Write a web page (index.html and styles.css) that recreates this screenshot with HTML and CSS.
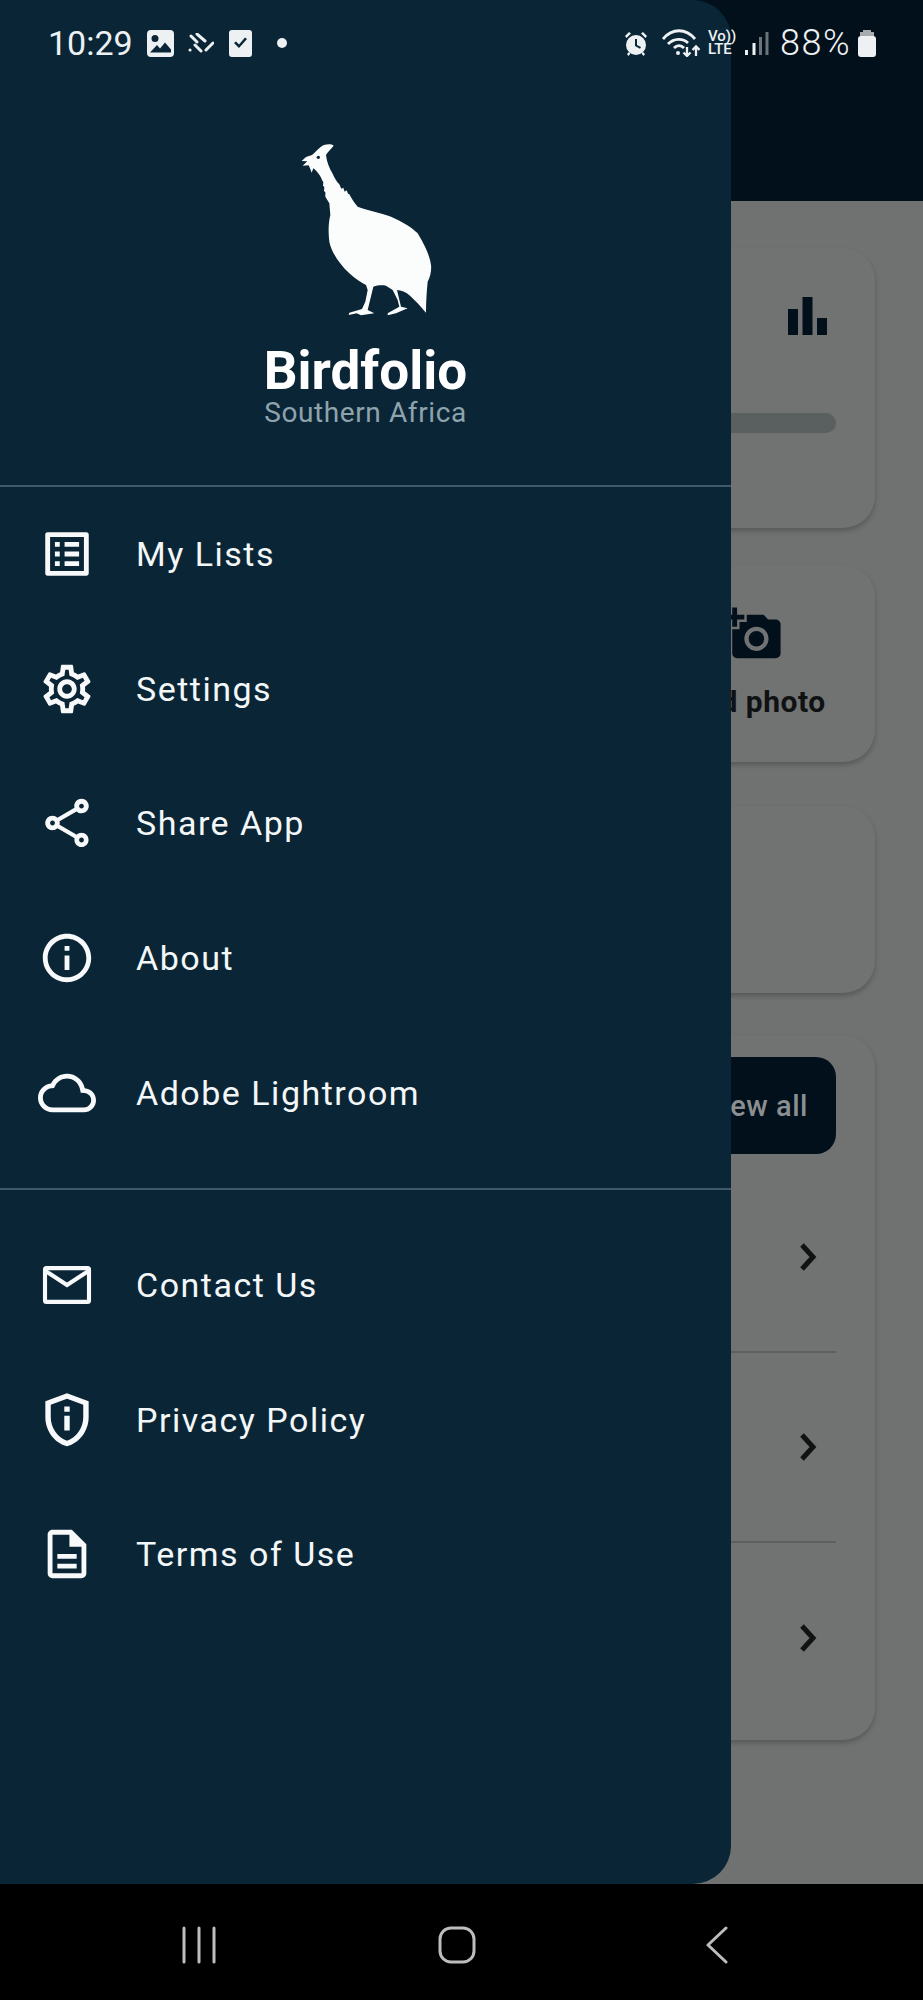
FILE: index.html
```html
<!DOCTYPE html>
<html lang="en">
<head>
<meta charset="utf-8">
<title>Birdfolio</title>
<link rel="stylesheet" href="styles.css">
</head>
<body>
<div class="phone">
  <main class="screen">
    <div class="appbar"></div>
    <div class="content">
      <section class="card card-stats">
        <svg class="bars" viewBox="0 0 39 38"><rect x="0" y="12" width="10" height="26"/><rect x="14.500" y="0" width="10" height="38"/><rect x="29" y="21" width="10" height="17"/></svg>
        <div class="progress"></div>
      </section>
      <section class="card card-photo">
        <div class="photo-tile">
          <svg class="camera" viewBox="0 0 24 24"><path fill-rule="evenodd" d="M3 4V1h2v3h3v2H5v3H3V6H0V4h3zm3 6V7h3V4h7l1.830 2H21c1.100 0 2 .9 2 2v12c0 1.100-.9 2-2 2H5c-1.100 0-2-.9-2-2V10h3zm7 9c2.760 0 5-2.240 5-5s-2.240-5-5-5-5 2.240-5 5 2.240 5 5 5z"/><circle class="lens-dark" cx="13" cy="14" r="3.200"/></svg>
          <span class="photo-label">Add photo</span>
        </div>
      </section>
      <section class="card card-blank"></section>
      <section class="card card-list">
        <div class="view-all"><span>View all</span></div>
        <div class="list-row"><svg class="chev" viewBox="0 0 18 28"><path d="M3 2l11 12L3 26"/></svg></div>
        <div class="list-row"><svg class="chev" viewBox="0 0 18 28"><path d="M3 2l11 12L3 26"/></svg></div>
        <div class="list-row"><svg class="chev" viewBox="0 0 18 28"><path d="M3 2l11 12L3 26"/></svg></div>
      </section>
    </div>
  </main>

  <nav class="navbar">
    <svg class="nav-recent" viewBox="0 0 34 38"><path d="M2 2v34M17 2v34M32 2v34"/></svg>
    <svg class="nav-home" viewBox="0 0 38 38"><rect x="2" y="2" width="34" height="34" rx="11"/></svg>
    <svg class="nav-back" viewBox="0 0 22 38"><path d="M20 2L2 19l18 17"/></svg>
  </nav>

  <aside class="drawer">
    <header class="drawer-head">
      <svg class="bird" viewBox="0 0 450 570">
        <path d="M143 32C135 26 118 26 105 35C95 42 88 52 78 60L60 66L47 78L64 79L50 92L68 91L72 100L77 113L82 100C92 108 104 122 108 135L112 142L111 152L115 156L114 168L118 172L118 185L130 205L133 240C128 260 126 285 130 320C136 350 158 385 190 415C205 430 225 443 240 450L245 465L238 500L228 522L190 533L188 540L212 535L225 541L265 535L245 525L262 455C275 450 290 450 300 452L320 465L335 495L340 515L305 535L305 541L330 535L365 520L345 515L333 465C345 465 360 472 372 482L395 505L420 533C420 500 422 470 425 440C433 425 437 405 435 390C432 370 425 345 395 295C375 275 345 258 315 245C290 235 240 225 215 215C205 205 197 190 190 178L186 176L182 166L176 170L172 158L166 161L160 148C152 140 145 128 140 116C130 100 122 80 120 60C125 50 135 42 143 32Z"/>
        <circle class="bird-eye" cx="97" cy="67" r="5"/>
      </svg>
      <h1 class="brand">Birdfolio</h1>
      <p class="region">Southern Africa</p>
    </header>
    <ul class="menu menu-main">
      <li class="menu-item"><svg class="ico" viewBox="0 0 24 24"><path d="M19 5v14H5V5h14m1.100-2H3.900c-.5 0-.9.4-.9.9v16.200c0 .4.4.9.9.9h16.200c.4 0 .9-.5.9-.9V3.900c0-.5-.5-.9-.9-.9zM11 7h6v2h-6V7zm0 4h6v2h-6v-2zm0 4h6v2h-6zM7 7h2v2H7zm0 4h2v2H7zm0 4h2v2H7z"/></svg><span>My Lists</span></li>
      <li class="menu-item"><svg class="ico" viewBox="0 0 24 24"><path d="M19.430 12.980c.04-.32.07-.64.07-.98 0-.34-.03-.66-.07-.98l2.110-1.650c.19-.15.24-.42.12-.64l-2-3.460c-.09-.16-.26-.25-.44-.25-.06 0-.12.01-.17.03l-2.490 1c-.52-.4-1.080-.73-1.690-.98l-.38-2.650C14.460 2.180 14.250 2 14 2h-4c-.25 0-.46.18-.49.42l-.38 2.650c-.61.25-1.170.59-1.690.98l-2.490-1c-.06-.02-.12-.03-.18-.03-.17 0-.34.09-.43.25l-2 3.460c-.13.22-.07.49.12.64l2.110 1.650c-.04.32-.07.65-.07.98 0 .33.03.66.07.98l-2.110 1.650c-.19.15-.24.42-.12.64l2 3.460c.09.16.26.25.44.25.06 0 .12-.01.17-.03l2.490-1c.52.4 1.080.73 1.690.98l.38 2.650c.03.24.24.42.49.42h4c.25 0 .46-.18.49-.42l.38-2.650c.61-.25 1.170-.59 1.690-.98l2.490 1c.06.02.12.03.18.03.17 0 .34-.09.43-.25l2-3.460c.12-.22.07-.49-.12-.64l-2.110-1.650zm-1.980-1.710c.04.31.05.52.05.73 0 .21-.02.43-.05.73l-.14 1.130.89.7 1.080.84-.7 1.210-1.270-.51-1.040-.42-.9.68c-.43.32-.84.56-1.250.73l-1.060.43-.16 1.130-.2 1.350h-1.400l-.19-1.350-.16-1.130-1.060-.43c-.43-.18-.83-.41-1.230-.71l-.91-.7-1.060.43-1.270.51-.7-1.210 1.080-.84.89-.7-.14-1.130c-.03-.31-.05-.54-.05-.74s.02-.43.05-.73l.14-1.130-.89-.7-1.080-.84.7-1.210 1.270.51 1.040.42.9-.68c.43-.32.84-.56 1.250-.73l1.060-.43.16-1.130.2-1.350h1.390l.19 1.350.16 1.130 1.060.43c.43.18.83.41 1.230.71l.91.7 1.060-.43 1.270-.51.7 1.210-1.070.85-.89.7.14 1.130zM12 8c-2.210 0-4 1.790-4 4s1.790 4 4 4 4-1.790 4-4-1.790-4-4-4zm0 6c-1.100 0-2-.9-2-2s.9-2 2-2 2 .9 2 2-.9 2-2 2z"/></svg><span>Settings</span></li>
      <li class="menu-item"><svg class="ico" viewBox="0 0 24 24"><path d="M18 16.080c-.76 0-1.440.3-1.960.77L8.910 12.700c.05-.23.09-.46.09-.7s-.04-.47-.09-.7l7.050-4.110c.54.5 1.250.81 2.040.81 1.660 0 3-1.340 3-3s-1.340-3-3-3-3 1.340-3 3c0 .24.04.47.09.7L8.040 9.810C7.500 9.310 6.790 9 6 9c-1.660 0-3 1.340-3 3s1.340 3 3 3c.79 0 1.500-.31 2.040-.81l7.120 4.160c-.05.21-.08.43-.08.65 0 1.610 1.310 2.920 2.920 2.920s2.920-1.310 2.920-2.920c0-1.610-1.310-2.920-2.920-2.920zM18 4c.55 0 1 .45 1 1s-.45 1-1 1-1-.45-1-1 .45-1 1-1zM6 13c-.55 0-1-.45-1-1s.45-1 1-1 1 .45 1 1-.45 1-1 1zm12 7.020c-.55 0-1-.45-1-1s.45-1 1-1 1 .45 1 1-.45 1-1 1z"/></svg><span>Share App</span></li>
      <li class="menu-item"><svg class="ico" viewBox="0 0 24 24"><path d="M11 7h2v2h-2zm0 4h2v6h-2zm1-9C6.480 2 2 6.480 2 12s4.480 10 10 10 10-4.480 10-10S17.520 2 12 2zm0 18c-4.410 0-8-3.590-8-8s3.590-8 8-8 8 3.590 8 8-3.590 8-8 8z"/></svg><span>About</span></li>
      <li class="menu-item"><svg class="ico" viewBox="0 0 24 24"><path d="M12 6c2.620 0 4.880 1.860 5.390 4.430l.3 1.500 1.530.11c1.560.1 2.780 1.410 2.780 2.960 0 1.650-1.350 3-3 3H6c-2.210 0-4-1.790-4-4 0-2.050 1.530-3.760 3.560-3.970l1.070-.11.5-.95C8.080 7.140 9.940 6 12 6m0-2C9.110 4 6.600 5.640 5.350 8.040 2.340 8.360 0 10.910 0 14c0 3.310 2.690 6 6 6h13c2.760 0 5-2.240 5-5 0-2.640-2.050-4.780-4.650-4.960C18.670 6.590 15.640 4 12 4z"/></svg><span>Adobe Lightroom</span></li>
    </ul>
    <ul class="menu">
      <li class="menu-item"><svg class="ico ico-line" viewBox="0 0 24 24"><rect x="2.900" y="5" width="18.200" height="14" rx=".6"/><path d="M3.300 6.300L12 12l8.700-5.700"/></svg><span>Contact Us</span></li>
      <li class="menu-item"><svg class="ico" viewBox="0 0 24 24"><path transform="translate(-1.440 -1.300) scale(1.120 1.100)" d="M12 2 4 5v6.090c0 5.050 3.410 9.760 8 10.910 4.590-1.150 8-5.860 8-10.910V5l-8-3zm6 9.090c0 4-2.550 7.700-6 8.830-3.450-1.130-6-4.820-6-8.830v-4.700l6-2.250 6 2.250v4.700zM11 7h2v2h-2zm0 3.500h2v5.500h-2z"/></svg><span>Privacy Policy</span></li>
      <li class="menu-item"><svg class="ico" viewBox="0 0 24 24"><path d="M8 16h8v2H8zm0-4h8v2H8zm6-10H6c-1.100 0-2 .9-2 2v16c0 1.100.89 2 1.990 2H18c1.100 0 2-.9 2-2V8l-6-6zm4 18H6V4h7v5h5v11z"/></svg><span>Terms of Use</span></li>
    </ul>
  </aside>

  <div class="statusbar">
    <div class="status-left">
      <span class="clock">10:29</span>
      <svg class="st-img" viewBox="0 0 27 27"><path d="M4 0h19a4 4 0 0 1 4 4v19a4 4 0 0 1-4 4H4a4 4 0 0 1-4-4V4a4 4 0 0 1 4-4zM8 5a3.500 3.500 0 1 0 0 7 3.500 3.500 0 0 0 0-7zM3 22.500h21v-3l-6-7-5 6-3-3.500z" fill-rule="evenodd"/></svg>
      <svg class="st-stripes" viewBox="0 0 26 20"><path d="M3 3l6 6M9 1l8 7M7 12l6 6M25 10l-7 7M2 17h.1"/></svg>
      <svg class="st-check" viewBox="0 0 23 27"><path d="M3 0h17a3 3 0 0 1 3 3v21a3 3 0 0 1-3 3H3a3 3 0 0 1-3-3V3a3 3 0 0 1 3-3zM5 13l5 5 8-9-2-1.500-6 7-3-3z" fill-rule="evenodd"/></svg>
      <span class="st-dot"></span>
    </div>
    <div class="status-right">
      <svg class="st-alarm" viewBox="0 0 24 25"><path d="M12 4a10 10 0 1 0 0 20 10 10 0 0 0 0-20zM11 8h2v6l4 2-1 1.700-5-2.700z" fill-rule="evenodd"/><path d="M1 5l4-4 2 1.500-4.500 4.500zM23 5l-4-4-2 1.500 4.500 4.500zM3 23l2-2 1.500 1.500L4.500 25zM21 23l-2-2-1.500 1.500 2 2.500z"/></svg>
      <svg class="st-wifi" viewBox="0 0 38 28"><path class="st-line" d="M1 10C10-1 24-1 33 10M6 15c6-6 15-6 20-1M12 19c3-3 7-3 10 0"/><circle cx="16" cy="24" r="2"/><path class="st-line thin" d="M25 18v9M21.500 23.500l3.500 3.500 3.500-3.500M34 27v-9M30.500 21l3.500-3.500 3.500 3.500"/></svg>
      <span class="volte"><span>Vo))</span><span>LTE</span></span>
      <svg class="st-signal" viewBox="0 0 24 24"><rect x="0" y="19" width="3" height="5"/><rect x="7.500" y="12" width="3" height="12"/><rect class="dim" x="14" y="6" width="3" height="18"/><rect class="dim" x="20.500" y="1" width="3" height="23"/></svg>
      <span class="pct">88%</span>
      <svg class="st-batt" viewBox="0 0 18 27"><path class="dim" d="M5 0h8v2h3v5H2V2h3z"/><path d="M3 6h12a3 3 0 0 1 3 3v15a3 3 0 0 1-3 3H3a3 3 0 0 1-3-3V9a3 3 0 0 1 3-3z"/></svg>
    </div>
  </div>
</div>
</body>
</html>
```
FILE: styles.css
```css
* { box-sizing: border-box; }
html, body { margin: 0; padding: 0; background: #000; }
body { font-family: Roboto, "Liberation Sans", sans-serif; }
.phone { position: relative; width: 923px; height: 2000px; overflow: hidden; display: flex; flex-direction: column; }

/* dimmed page behind the drawer */
.screen { flex: 0 0 1884px; background: #707271; display: flex; flex-direction: column; }
.appbar { flex: 0 0 201px; background: #01101a; }
.content { flex: 1; padding: 47px 48px 0 0; display: flex; flex-direction: column; }
.card { position: relative; background: #717372; border-radius: 32px; box-shadow: 0 3px 5px rgba(0,0,0,.22); display: flex; flex-direction: column; align-items: flex-end; padding-right: 39px; margin-left: 600px; }
.card-stats { height: 280px; margin-bottom: 37px; padding-top: 49px; }
.bars { width: 39px; height: 38px; margin-right: 9px; fill: #01101a; display: block; }
.progress { width: 236px; height: 20px; margin-top: 78px; background: #5a5f60; border-radius: 10px; }
.card-photo { height: 197px; margin-bottom: 44px; padding-top: 40px; padding-right: 21px; }
.photo-tile { width: 200px; display: flex; flex-direction: column; align-items: center; }
.camera { width: 58px; height: 58px; fill: #01101a; display: block; }
.lens-dark { fill: #01101a; }
.photo-label { font-size: 30px; font-weight: 700; letter-spacing: .5px; color: #0f1112; line-height: 36px; margin-top: 21px; white-space: nowrap; }
.card-blank { height: 187px; margin-bottom: 42px; }
.card-list { height: 705px; padding-top: 22px; }
.view-all { width: 220px; height: 97px; background: #01101a; border-radius: 20px; display: flex; align-items: center; justify-content: flex-end; padding-right: 28px; color: #8b8f91; font-size: 29px; font-weight: 500; letter-spacing: .5px; margin-bottom: 9px; }
.list-row { width: 236px; height: 190px; display: flex; align-items: center; justify-content: flex-end; padding-right: 19px; border-bottom: 2px solid #5d6060; }
.list-row:last-child { border-bottom: 0; }
.chev { width: 18px; height: 28px; fill: none; stroke: #101213; stroke-width: 5; }

/* android navigation bar */
.navbar { flex: 1; background: #000; display: flex; align-items: center; padding-top: 6px; }
.navbar svg { height: 38px; fill: none; stroke: #bdbdbd; stroke-width: 3; stroke-linecap: round; stroke-linejoin: round; display: block; }
.nav-recent { width: 34px; margin-left: 182px; }
.nav-home { width: 38px; margin-left: 222px; }
.nav-back { width: 22px; margin-left: 230px; }

/* drawer */
.drawer { position: absolute; top: 0; left: 0; width: 731px; height: 1884px; background: #0a2636; border-radius: 0 38px 38px 0; color: #f4f7f8; }
.drawer-head { height: 487px; padding-top: 135px; display: flex; flex-direction: column; align-items: center; border-bottom: 2px solid #415a68; }
.bird { width: 150px; height: 190px; margin: 0 10px 0 0; fill: #fbfcfc; display: block; }
.bird-eye { fill: #0a2636; }
.brand { margin: 20px 0 0; font-size: 53px; line-height: 52px; font-weight: 700; color: #fff; }
.region { margin: 0; font-size: 28px; line-height: 32px; letter-spacing: .6px; color: #8fa3ad; }
.menu { list-style: none; margin: 0; padding: 28px 0 0; }
.menu-main { padding: 0 0 28px; border-bottom: 2px solid #415a68; }
.menu-item { height: 134.600px; display: flex; align-items: center; padding-left: 38px; font-size: 34px; letter-spacing: 1.500px; }
.ico { width: 58px; height: 58px; fill: #f7f9fa; flex: none; margin-right: 40px; display: block; }
.ico-line { fill: none; stroke: #f7f9fa; stroke-width: 1.700; }

/* status bar */
.statusbar { position: absolute; top: 0; left: 0; width: 923px; height: 86px; display: flex; justify-content: space-between; align-items: center; padding: 0 47px 0 48px; color: #eef1f3; }
.status-left, .status-right { display: flex; align-items: center; }
.statusbar svg { display: block; fill: #eef1f3; }
.clock { font-size: 34px; margin-right: 14px; }
.st-img { width: 27px; height: 27px; margin-right: 14px; }
.statusbar .st-stripes { width: 26px; height: 20px; margin-right: 15px; fill: none; stroke: #eef1f3; stroke-width: 3; stroke-linecap: round; }
.st-check { width: 23px; height: 27px; margin-right: 25px; }
.st-dot { width: 10px; height: 10px; background: #eef1f3; border-radius: 50%; }
.st-alarm { width: 24px; height: 25px; margin-right: 14px; }
.st-wifi { width: 38px; height: 28px; margin-right: 8px; }
.statusbar .st-line { fill: none; stroke: #eef1f3; stroke-width: 2.800; }
.statusbar .st-line.thin { stroke-width: 2.300; }
.volte { display: flex; flex-direction: column; width: 27px; margin-right: 10px; font-size: 15px; line-height: 13px; font-weight: 500; white-space: nowrap; }
.st-signal { width: 24px; height: 24px; margin-right: 11px; }
.statusbar .st-signal .dim { fill: #6b747a; }
.statusbar .st-batt .dim { fill: #a6abaf; }
.pct { font-size: 36px; letter-spacing: 1.500px; font-weight: 300; margin-right: 7px; }
.st-batt { width: 18px; height: 27px; }
```
